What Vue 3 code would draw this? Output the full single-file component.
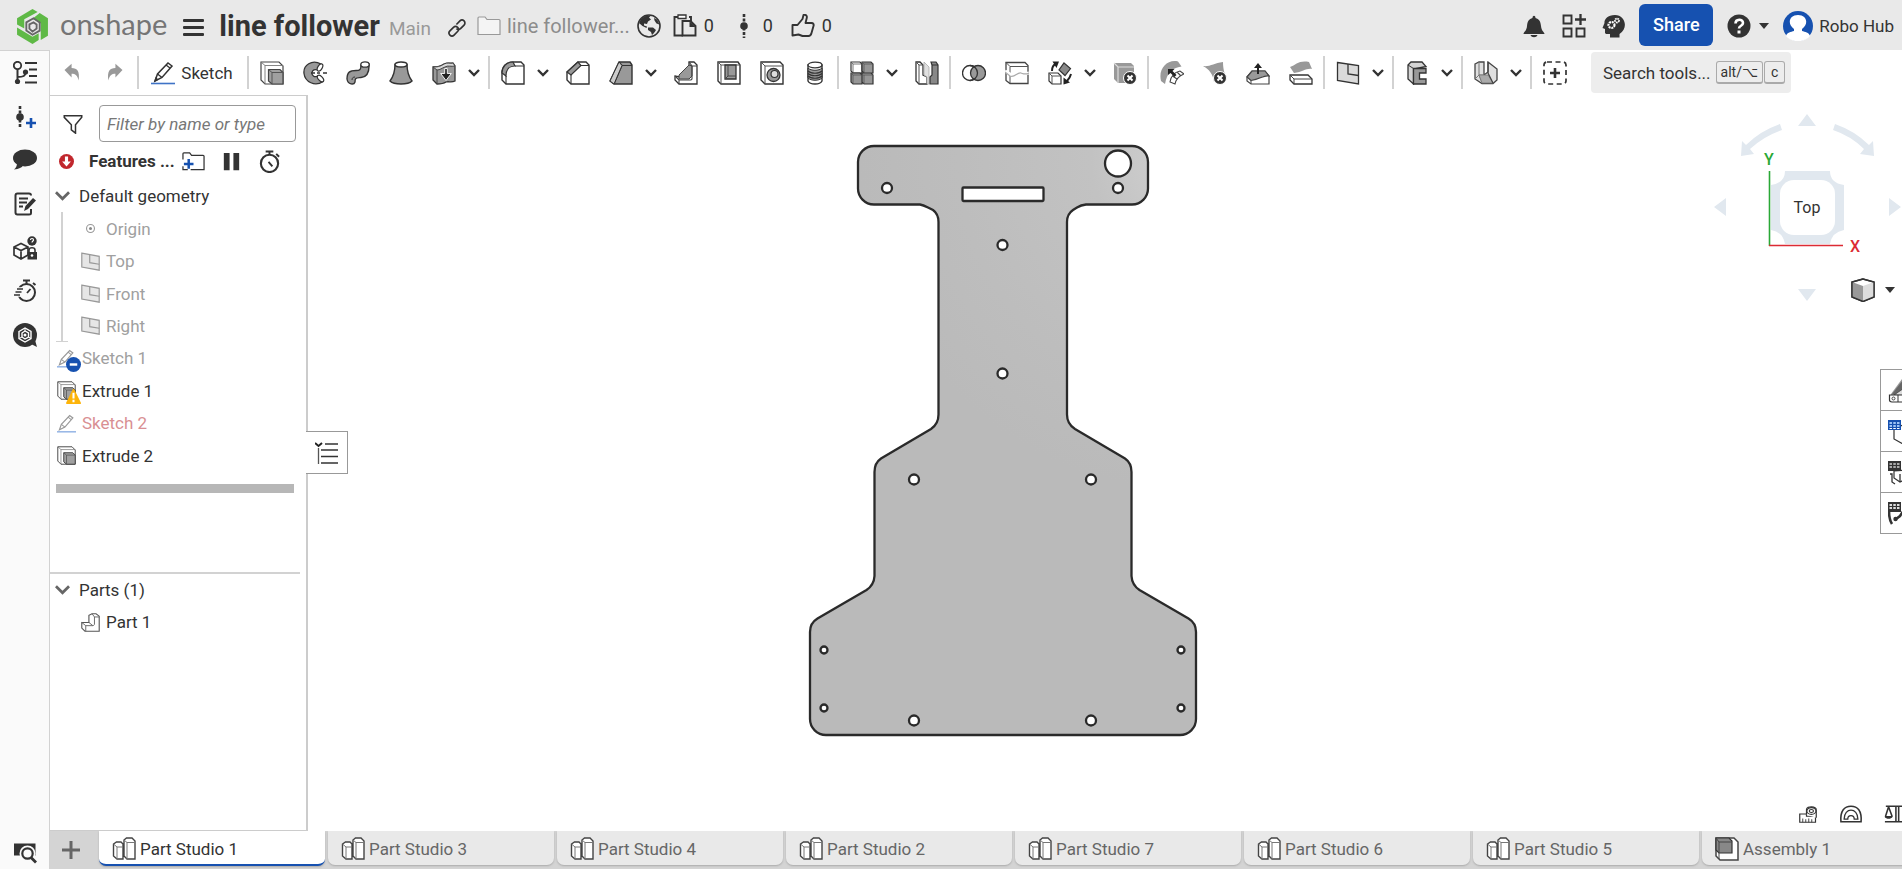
<script setup>
import { ref } from 'vue'

const filter = ref('')

const icons = {
  undo: '<path d="M3 8.500L11.500 1v5c7 0 10 4 8.500 15-1.500-6-4-8-8.500-8v4.500z" fill="#999"/>',
  redo: '<path d="M21 8.500L12.500 1v5c-7 0-10 4-8.500 15 1.500-6 4-8 8.500-8v4.500z" fill="#999"/>',
  sketch: '<path d="M4 20L6.500 13 17 2l4 3L11 16.500z" fill="#fff" stroke="#333" stroke-width="1.500"/><path d="M6.500 13l4.500 3.500M15 4l4 3M4 20l1-3 1.500 1.500z" fill="none" stroke="#333" stroke-width="1.300"/><path d="M0 22.500h24" stroke="#3f73c6" stroke-width="1.600"/>',
  extrude: '<path d="M1 1h18l4 4v18H5l-4-4z" fill="#fff" stroke="#444" stroke-width="1.200"/><path d="M1 1l4 3.500h18M5 4.500V23" fill="none" stroke="#777" stroke-width=".9"/><path d="M8.500 8.500H20l3 3V23H12l-3.500-3z" fill="#a0a0a0" stroke="#444" stroke-width="1.200"/><path d="M8.500 8.500l3.500 3h11M12 11.500V23" fill="none" stroke="#555" stroke-width="1"/>',
  revolve: '<path d="M18 3C9-2 0 4 1 12.500S12 26 20 20.500L14.500 15c-3 2-6-1-5.500-3.500S12 8 14.500 9z" fill="#999" stroke="#333" stroke-width="1.300"/><ellipse cx="17" cy="6.500" rx="4" ry="2.200" transform="rotate(-60 17 6.500)" fill="#fff" stroke="#333" stroke-width="1.200"/><ellipse cx="17.500" cy="17.500" rx="4" ry="2.200" transform="rotate(48 17.500 17.500)" fill="#fff" stroke="#333" stroke-width="1.200"/><path d="M8 12h4m2 0h3m3 0h4" stroke="#333" stroke-width="1.300"/>',
  sweep: '<path d="M1 18c0-7 3-8.500 9-8.500 4 0 5-1 5-5.500l8-1c.500 9-2 13-8 13.500-5 .500-6 0-6 4.500-1 3-7 3-8-3z" fill="#999" stroke="#333" stroke-width="1.400"/><ellipse cx="19" cy="3.500" rx="4.200" ry="2.700" fill="#fff" stroke="#333" stroke-width="1.300"/><path d="M9 16c-2 0-3 1-3 3" fill="none" stroke="#333"/>',
  loft: '<path d="M6 3.500C6 10 4 16 1 20c4 4 18 4 22 0-3-4-5-10-5-16.500z" fill="#999" stroke="#333" stroke-width="1.400"/><ellipse cx="12" cy="3.500" rx="6" ry="2.500" fill="#fff" stroke="#333" stroke-width="1.400"/>',
  thicken: '<path d="M1 6c6 0 8-1 11-3 4-2 6 0 9-1l2 3v15c-4 2-6 0-9 1-3 2-6 2-9 2l-4-4z" fill="#999" stroke="#333" stroke-width="1.300"/><path d="M1 6c6 0 8-1 11-3 4-2 6 0 9-1l2 3c-4 1-7-1-10 1-3 1-5 3-8 3z" fill="#d8d8d8" stroke="#444"/><path d="M5 9v14" stroke="#444"/><path d="M12.700 7.500h2.600v5h4L14 19.500 8.700 12.500h4z" fill="#222" stroke="#fff" stroke-width=".9"/>',
  fillet: '<path d="M12 1h8l3 3v19H5l-4-4v-7C1 6 5 1 12 1z" fill="#fff" stroke="#333" stroke-width="1.400"/><path d="M12 1C5 1 1 6 1 12l4 3c0-6 3-10 9-10z" fill="#999" stroke="#333" stroke-width="1.200"/><path d="M5 15v8M14 5h9" fill="none" stroke="#333" stroke-width="1.100"/>',
  chamfer: '<path d="M12 1h8l3 3v19H5l-4-4v-8z" fill="#fff" stroke="#333" stroke-width="1.400"/><path d="M12 1L1 11l4 3L15 4.500z" fill="#999" stroke="#333" stroke-width="1.200"/><path d="M5 14v9M15 4.500h8" fill="none" stroke="#333" stroke-width="1.100"/>',
  draft: '<path d="M10 1h11l2 3v19H5l-4-3z" fill="#999" stroke="#333" stroke-width="1.400"/><path d="M10 1l3 3.500h10M13 4.500L5 23" fill="none" stroke="#333" stroke-width="1.200"/><path d="M10 1l3 3.500L5 23l-4-3z" fill="#ccc" stroke="#333"/>',
  rib: '<path d="M15 1h5l3 3v19H5l-4-4v-4l5 1 9-9z" fill="#fff" stroke="#333" stroke-width="1.300"/><path d="M15 4L5 14l0 4h10l3-3V5z" fill="#999" stroke="#444"/><path d="M1 15l4 4h12l1-1V5l-3-4M18 5h5M5 19v4" fill="none" stroke="#444" stroke-width="1.100"/>',
  shell: '<path d="M1 1h20l2 3v19H4l-3-3z" fill="#fff" stroke="#333" stroke-width="1.400"/><path d="M1 1l3 3h19M4 4v19" fill="none" stroke="#555"/><path d="M8 4h11v14H8z" fill="#999" stroke="#333" stroke-width="1.300"/><path d="M8 18l3-3h8M11 4v11" fill="none" stroke="#444"/>',
  hole: '<path d="M1 1h19l3 3v19H5l-4-4z" fill="#fff" stroke="#333" stroke-width="1.400"/><path d="M1 1l4 4h18M5 5v18" fill="none" stroke="#555"/><circle cx="13.500" cy="14" r="6.500" fill="#999" stroke="#333" stroke-width="1.300"/><circle cx="14.500" cy="13" r="3.500" fill="#ddd" stroke="#333" stroke-width="1.200"/>',
  thread: '<path d="M5 4v16c2 4 12 4 14 0V4z" fill="#fff" stroke="#333" stroke-width="1.400"/><ellipse cx="12" cy="4" rx="7" ry="2.800" fill="#fff" stroke="#333" stroke-width="1.300"/><path d="M5 7c3 3 11 3 14 0v10c-3 3-11 3-14 0z" fill="#999" stroke="#333"/><path d="M5 10c3 3 11 3 14 0M5 12.500c3 3 11 3 14 0M5 15c3 3 11 3 14 0" fill="none" stroke="#333" stroke-width="1.200"/>',
  pattern: '<g stroke="#333" stroke-width="1.200"><path d="M1 1h9l2 2v9H3l-2-2z" fill="#fff"/><path d="M12 1h9l2 2v9h-9l-2-2zM1 12h9l2 2v9H3l-2-2zM12 12h9l2 2v9h-9l-2-2z" fill="#969696"/></g><path d="M1 1l2 2h9M3 3v9M12 1l2 2h9M14 3v9M1 12l2 2h20M3 14v9M14 14v9" fill="none" stroke="#555" stroke-width=".8"/>',
  mirror: '<path d="M1 1h4l3 3v10l4 2v7H4l-3-3z" fill="#fff" stroke="#333" stroke-width="1.300"/><path d="M1 1l3 3h4M4 4v19" fill="none" stroke="#555"/><path d="M9 1l5 5v17l-2 0V16l-3-2z" fill="#e0e0e0" stroke="#aaa" stroke-width=".8"/><path d="M16 1h5l2 3v19h-8v-7l2-2V4z" fill="#888" stroke="#333" stroke-width="1.200"/><path d="M17 4h6" fill="none" stroke="#333"/>',
  boolean: '<circle cx="8" cy="12" r="7.500" fill="#fff" stroke="#333" stroke-width="1.300"/><circle cx="16" cy="12" r="7.500" fill="#999" stroke="#333" stroke-width="1.300"/><path d="M8 4.500a7.500 7.500 0 0 1 0 15" fill="none" stroke="#333" stroke-width="1.300"/>',
  split: '<path d="M1 1.500h19l3 3v18H5l-4-3z" fill="#fff" stroke="#444" stroke-width="1.300"/><path d="M1 1.500l4 4h18M5 5.500V22" fill="none" stroke="#555"/><path d="M0 10l5 3c5 4 7-3 11-2 3 1 4 2 8 1" fill="none" stroke="#fff" stroke-width="3"/><path d="M0 11l5 4c5 2 7-4 11-3 3 1 4 2 8 0" fill="none" stroke="#aaa" stroke-width="1.200"/>',
  transform: '<path d="M1 12h9l3 3v8H4l-3-3z" fill="#fff" stroke="#333" stroke-width="1.200"/><path d="M1 12l3 3h9M4 15v8" fill="none" stroke="#555"/><path d="M16 2l6.500 5.500-5.500 7-6-5.500z" fill="#888" stroke="#333" stroke-width="1.200"/><path d="M4 10c0-4 1-6 4-7" fill="none" stroke="#222" stroke-width="2"/><path d="M4.500.5H11L8.500 7zM15.500 16.500v7l6.500-2z" fill="#222"/><path d="M23 13c-1 4-2 5-4 7" fill="none" stroke="#222" stroke-width="2"/>',
  remove: '<path d="M1 2h17l3 3v17H5l-4-4z" fill="#999"/><path d="M1 2l4 4h16M5 6v16" fill="none" stroke="#ddd" stroke-width="1.200"/><circle cx="17" cy="17" r="6.500" fill="#333" stroke="#fff" stroke-width="1"/><path d="M14.500 14.500l5 5m0-5l-5 5" stroke="#fff" stroke-width="2"/>',
  modfillet: '<path d="M1 20C-2 8 7-2 18 .5l3.500 5C12 7 7 12 5 23z" fill="#999"/><path d="M10 22c1-6 5-10 10-12l4 3c-5 2-8 5-9 11z" fill="#fff" stroke="#fff" stroke-width="3"/><path d="M10 21c1-6 5-10 10-11l4 3c-5 2-8 5-9 10zM12.500 15l4.500 3M17 11l3.500 3.500" fill="#fff" stroke="#444" stroke-width="1.100"/><path d="M8 8h6.500l-2 2 4 4-2 2-4-4L8 14z" fill="#222"/>',
  delface: '<path d="M0 5c7 1 11-3 20-4 0 8 2 12 3 16L11 21C10 13 6 8 0 5z" fill="#999"/><circle cx="17" cy="17" r="6.500" fill="#333" stroke="#fff" stroke-width="1"/><path d="M14.500 14.500l5 5m0-5l-5 5" stroke="#fff" stroke-width="2"/>',
  moveface: '<path d="M1 16l5-6h13l4 5v8H5l-4-3z" fill="#fff" stroke="#444" stroke-width="1.200"/><path d="M1 16l5-6h13l4 5c-6-1-8 3-18 4.500z" fill="#999" stroke="#444" stroke-width="1.200"/><path d="M5 20v3" stroke="#444"/><path d="M12 2l4 5h-3v6h-2V7H8z" fill="#222"/>',
  replace: '<path d="M1 6C7 4 10-1 20 1l3 7c-6-1-9 3-18 4z" fill="#999"/><path d="M1 14h18l4 4v5H5l-4-4z" fill="#fff" stroke="#333" stroke-width="1.300"/><path d="M1 14l4 4h18M5 18v5" fill="none" stroke="#444"/>',
  plane: '<path d="M1.500 1.500l21 3V23l-21-3.500z" fill="#dadada" stroke="#333" stroke-width="1.300"/><path d="M12 3v10l10.500 1.500" fill="none" stroke="#333" stroke-width="1.300"/>',
  frame: '<path d="M3 4l3-3h11l4 4.500L8.500 8v15L3 18z" fill="#d4d4d4" stroke="#333" stroke-width="1.300"/><path d="M8.500 7.500H21V12h-6.500v6H21v5H8.500z" fill="#999" stroke="#333" stroke-width="1.300"/><path d="M3 4l5.500 3.500" stroke="#333"/>',
  sheet: '<path d="M1 3l4-2h5v13l4-3V1l9 7v11l-4 3.500H8L1 18z" fill="#e0e0e0" stroke="#444" stroke-width="1.300"/><path d="M5 1v13l-4 4M10 14H5l3 8" fill="none" stroke="#777"/><path d="M5 14h9l5 8H8z" fill="#aaa" stroke="#777" stroke-width=".8"/><path d="M14 1v11l5 10" fill="none" stroke="#444" stroke-width="1.200"/>',
  custom: '<rect x="1" y="1" width="22" height="22" rx="3" fill="none" stroke="#333" stroke-width="1.700" stroke-dasharray="5 3.500"/><path d="M12 7v10M7 12h10" stroke="#333" stroke-width="2.600"/>',
  tree: '<circle cx="4.500" cy="4.500" r="3.700" fill="none" stroke="#333" stroke-width="1.800"/><path d="M4.500 8v12M4.500 16c6 0 8-1 8-5" fill="none" stroke="#333" stroke-width="2"/><circle cx="4.500" cy="20.500" r="2.600" fill="#333"/><circle cx="12.500" cy="11" r="2.600" fill="#333"/><path d="M12 2h12M16 8.500h8M16 15h8M12 21.500h12" stroke="#333" stroke-width="2.200"/>',
  addversion: '<path d="M7 1v22" stroke="#333" stroke-width="2.600" stroke-dasharray="3 1.500"/><circle cx="7" cy="12" r="3.800" fill="#333"/><path d="M18 13v10M13 18h10" stroke="#1651b0" stroke-width="2.600"/>',
  comment: '<ellipse cx="12" cy="10" rx="12" ry="8.500" fill="#333"/><path d="M4 15c0 3-1 5-3 6.500 5-.500 8-2 9-4z" fill="#333"/>',
  note: '<path d="M18 17v4c0 1-1 1.500-2 1.500H4.500c-1.500 0-2-.500-2-2V3.500c0-1.500.500-2 2-2H16c1.500 0 2 .500 2 2" fill="none" stroke="#333" stroke-width="2"/><path d="M6 6.500h9M6 10.500h8M6 14.500h4" stroke="#333" stroke-width="1.800"/><path d="M11 19l1.500-5L20 6l3 2.500-8 8.500z" fill="#333"/>',
  cubelock: '<path d="M1 11l7-3.500 7 3.500v8l-7 4-7-4zM1 11l7 3.500L15 11M8 14.500V23" fill="none" stroke="#333" stroke-width="1.700"/><circle cx="19" cy="5" r="4.700" fill="#333"/><path d="M17.500 4c0-2 3-2 3 0 0 1-1.500 1-1.500 2.500" stroke="#fff" stroke-width="1.200" fill="none"/><path d="M16 17v-3c0-3 6-3 6 0v3" fill="none" stroke="#333" stroke-width="1.600"/><path d="M14.500 16H24v7.500h-9.500z" fill="#333"/><circle cx="19" cy="19.500" r="1.300" fill="#fff"/>',
  speed: '<circle cx="13.500" cy="13.500" r="8.500" fill="none" stroke="#333" stroke-width="2"/><path d="M10 1.500h7M13.500 1.500V5M20 4l2.500 2" stroke="#333" stroke-width="2"/><path d="M14 14l3.500-4" stroke="#333" stroke-width="1.800"/><path d="M4 10h7M2 13h8M1 16h7" stroke="#fafafa" stroke-width="3.500"/><path d="M4 10h6M2.500 13h6M1 16h6" stroke="#333" stroke-width="1.500"/>',
  assist: '<circle cx="12" cy="12" r="12" fill="#333"/><path d="M16 20l8 4-2-7z" fill="#333"/><path d="M6 8.500L12 5l6 3.500v7L12 19l-6-3.500z" fill="none" stroke="#fff" stroke-width="1.400"/><path d="M9 10l3-2 3.500 2v4L12 16l-3-2z" fill="none" stroke="#fff" stroke-width="1.400"/><circle cx="12" cy="12" r="1.500" fill="#fff"/><path d="M12 5v3M18 15.500L15.500 14M6 15.500L9 14" stroke="#fff"/>',
  finder: '<path d="M1 3.500h21.500v12H1z" fill="#333"/><circle cx="14.500" cy="13.500" r="6.500" fill="#fafafa" stroke="#fafafa" stroke-width="3"/><circle cx="14.500" cy="13.500" r="5.200" fill="#fafafa" stroke="#333" stroke-width="2.200"/><path d="M18 17.500l5 5" stroke="#333" stroke-width="2.800"/>',
  studio: '<path d="M1.500 7l3-2H9l2 2v15H5l-3.500-3zM12 3l2.500-2H20l3 3v18h-8l-3-3z" fill="#fff" stroke="#444" stroke-width="1.400"/><path d="M1.500 7L5 10h6M5 10v12M12 3l3 2.500h8M15 5.500V22" fill="none" stroke="#777" stroke-width="1"/>',
  assembly: '<path d="M1 1h18l4 4v18H5l-4-4z" fill="#fff" stroke="#444" stroke-width="1.500"/><path d="M1 1h13l3 3v12H4l-3-3z" fill="#888" stroke="#333" stroke-width="1.200"/><path d="M1 1l3 4h13M4 5v17" fill="none" stroke="#444"/>',
  origin: '<circle cx="12" cy="12" r="5" fill="#fff" stroke="#999" stroke-width="1.400"/><circle cx="12" cy="12" r="1.900" fill="#888"/>',
  planelight: '<path d="M1 1.500l22 4V23L1 19z" fill="#e6e6e6" stroke="#999" stroke-width="1.500"/><path d="M11 3.500v10l12 2" fill="none" stroke="#999" stroke-width="1.500"/>',
  sketchlight: '<path d="M3 20l2.500-7L16 2l4 3L10 16.500z" fill="#fff" stroke="#999" stroke-width="1.500"/><path d="M5.500 13l4.500 3.500M14 4l4 3" fill="none" stroke="#999" stroke-width="1.300"/><path d="M0 22.500h24" stroke="#8fb0e4" stroke-width="1.800"/>',
  part: '<path d="M1 12h9V3l4-2h5l4 3v19H5l-4-4z" fill="#fff" stroke="#555" stroke-width="1.400"/><path d="M1 12l5 4h9c1 0 2-1 2-2V5l-3-4M17 5h6M6 16v7M10 12l5 4" fill="none" stroke="#666" stroke-width="1.200"/>',
  link: '<g transform="rotate(-45 12 12)" fill="none" stroke="#333" stroke-width="2"><rect x="0" y="8.500" width="13" height="7" rx="3.500"/><path d="M14.500 8.500h6a3.500 3.500 0 0 1 0 7h-6a3.500 3.500 0 0 1-3.500-3.500"/></g>',
  folder: '<path d="M1 20.500V4c0-.500.500-1 1-1h6l2 2.500h12c.500 0 1 .500 1 1v14z" fill="#f4f4f4" stroke="#999" stroke-width="1.200"/>',
  globe: '<circle cx="12" cy="12" r="11" fill="none" stroke="#333" stroke-width="1.600"/><path d="M4 5c3-3 6-4 10-3.500l-2 2 2 2-3 2-1 2.500-3-.5 0 2 3 1-.5 1.500-4-2L2 9zM11 13.500l5 0 3 2.500c-1 2-2 3-4 5l-1-3-3-2zM17 4l3 1.500 2.500 5-3-1-2-3z" fill="#333"/>',
  copy: '<path d="M10 21.500H1.500V3H5M16 3h2v4" fill="none" stroke="#333" stroke-width="1.900"/><path d="M5 1h8v3.500H5z" fill="#fff" stroke="#333" stroke-width="1.300"/><path d="M9.500 7h8l5 5v9.500h-13z" fill="#e9e9e9" stroke="#333" stroke-width="1.900"/><path d="M16.500 7v6h6z" fill="#333"/>',
  version: '<path d="M12 0v24" stroke="#333" stroke-width="2.600" stroke-dasharray="3 1.500"/><circle cx="12" cy="12" r="3.800" fill="#333"/>',
  thumb: '<path d="M1.500 11h5l5-6 1-4c3-.500 4 1 3 4l-1 4h6c2 0 2.500 1.500 2 3l-2 7c-.500 2-1 3-3 3h-6l-4-1.500-6 1z" fill="none" stroke="#333" stroke-width="1.900" stroke-linejoin="round"/>',
  bell: '<path d="M1.500 20c0-2 3-2.500 3.500-8 .500-5 2-7 5.500-8 0-3 3-3 3 0 3.500 1 5 3 5.500 8 .500 5.500 3.500 6 3.500 8z" fill="#333"/><path d="M8.500 21h7c-1 3-6 3-7 0z" fill="#333"/>',
  apps: '<path d="M1.500 1.500h8v8h-8zM1.500 14.500h8v8h-8zM14.500 14.500h8v8h-8z" fill="none" stroke="#333" stroke-width="1.900"/><path d="M18.500 0v11M13 5.500h11" stroke="#333" stroke-width="2.300"/>',
  head: '<path d="M13 1C5 1 2 6 2.500 9L0.500 14l2.500 1v4c1 1.500 3 1 5 1v3.500h9.500V20C27 14 23 1 13 1z" fill="#333"/><circle cx="9.500" cy="11" r="3" fill="none" stroke="#fff" stroke-width="2.200" stroke-dasharray="2 .8"/><circle cx="15" cy="6.500" r="2" fill="none" stroke="#fff" stroke-width="1.800" stroke-dasharray="1.600 .6"/>',
  help: '<circle cx="12" cy="12" r="11.500" fill="#333"/><path d="M8.500 9.500c0-5 7.500-5 7.500-.500 0 3-4 2.500-4 5.500" fill="none" stroke="#fff" stroke-width="2.600"/><path d="M10.500 16.500h3v3h-3z" fill="#fff"/>',
  filter: '<path d="M1.500 2h21v2L15 13v10l-5-4v-6L1.500 4z" fill="#fff" stroke="#333" stroke-width="1.800"/>',
  newfolder: '<path d="M1 8V4c0-.500.500-1 1-1h6l2 2.500h12c.500 0 1 .500 1 1v14H9M1 8v2m0 7v3.500h5" fill="none" stroke="#333" stroke-width="1.300"/><path d="M7 9.500v10M2 14.500h10" stroke="#1651b0" stroke-width="2.600"/>',
  pause: '<path d="M4 3h6v18H4zM14 3h6v18h-6z" fill="#333"/>',
  timer: '<circle cx="12" cy="14" r="9" fill="none" stroke="#333" stroke-width="2.200"/><path d="M8 1.500h8M12 1.500V5M19 4l3 3M11 12.500l4 4.500" stroke="#333" stroke-width="2"/>',
  error: '<circle cx="12" cy="12" r="12" fill="#c1272d"/><path d="M9.500 4h5v8H19l-7 8-7-8h4.500z" fill="#fff"/>',
  tape: '<path d="M1 12h9v3h12v8H1z" fill="#fff" stroke="#333" stroke-width="1.600"/><path d="M10 13V6c0-5 14-5 13 1v10" fill="#fff" stroke="#333" stroke-width="1.600"/><ellipse cx="16.500" cy="8" rx="6" ry="4.500" fill="#fff" stroke="#333" stroke-width="1.500"/><ellipse cx="16.500" cy="8" rx="2.800" ry="2" fill="none" stroke="#333" stroke-width="1.500"/><path d="M5 23v-5m4 5v-4m4 4v-5m4 5v-4" stroke="#333" stroke-width="1.200"/>',
  protractor: '<path d="M1 20.500C0 8 5 3.500 12 3.500S24 8 23 20.500z" fill="#fff" stroke="#333" stroke-width="1.700"/><path d="M4.500 17.500c0-13 15-13 15 0h-4c0-5-7-5-7 0z" fill="#fff" stroke="#333" stroke-width="1.400"/>',
  balance: '<path d="M2 3.500h22M5 4L1.500 15M5 4l4 11M1 15h8M13 3v17M16 3v17M1 20.500h23" fill="none" stroke="#333" stroke-width="1.700"/><path d="M1 15h8c-1 3-7 3-8 0z" fill="#333"/>',
  appearance: '<path d="M3 15L14 0h10v22H3z" fill="#999"/><path d="M4 15L15 1l9 4v12z" fill="#666"/><path d="M6 16l16-11 2 0v12z" fill="#ddd" stroke="#444" stroke-width=".8"/><path d="M1.500 16H24v7H4c-2 0-2.500-1-2.500-2z" fill="#fff" stroke="#333" stroke-width="1.200"/><path d="M10 16v7" stroke="#333"/><circle cx="5.500" cy="19.500" r="1.500" fill="none" stroke="#444"/>',
  config: '<path d="M6 9v10l9 5 9-4V6l-9-1z" fill="#fff" stroke="#333" stroke-width="1.200"/><path d="M0 0h13v10H0z" fill="#1651b0"/><path d="M1.500 2h2.500v2H1.500zM5.300 2h2.500v2H5.300zM9 2h2.500v2H9zM1.500 5h2.500v2H1.500zM5.300 5h2.500v2H5.300zM9 5h2.500v2H9z" fill="#9cc3f5"/><path d="M1.500 8h2.500v1H1.500zM5.300 8h2.500v1H5.300zM9 8h2.500v1H9z" fill="#fff"/>',
  bom: '<path d="M6 10v7l6 4 8-4V9z" fill="#fff" stroke="#333" stroke-width="1.200"/><path d="M12 13v8M2 13h2v8l3 2" fill="none" stroke="#333" stroke-width="1.300"/><path d="M0 0h13v10H0z" fill="#333"/><path d="M1.500 2h2.500v2H1.500zM5.300 2h2.500v2H5.300zM9 2h2.500v2H9zM1.500 5h2.500v2H1.500zM5.300 5h2.500v2H5.300zM9 5h2.500v2H9z" fill="#aaa"/>',
  variables: '<path d="M1 9c0 7 1 10 3 13M8 17l4-3 4-6" fill="none" stroke="#333" stroke-width="2.600"/><circle cx="7.500" cy="17" r="2.200" fill="#333"/><path d="M0 0h13v10H0z" fill="#333"/><path d="M1.500 2h2.500v2H1.500zM5.300 2h2.500v2H5.300zM9 2h2.500v2H9zM1.500 5h2.500v2H1.500zM5.300 5h2.500v2H5.300zM9 5h2.500v2H9z" fill="#ddd"/>',
  list: '<path d="M0 2l3.500 3L7 2" fill="none" stroke="#222" stroke-width="2"/><path d="M3.500 7v16" stroke="#555" stroke-width="1.300"/><path d="M10 3h13M6 9h17M6 15.500h17M6 22h17" stroke="#333" stroke-width="1.500"/>',
  shaded: '<path d="M12 1L1 4v15l11 4.500L23 19V4z" fill="#fff" stroke="#333" stroke-width="1.400"/><path d="M1 4l11 4v15L1 19z" fill="#999"/><path d="M23 4L12 8v15l11-4z" fill="#ddd"/><path d="M12 1L1 4v15l11 4.500L23 19V4z" fill="none" stroke="#333" stroke-width="1.400"/>'
}

// A "|" is a separator and a "v" opens the menu of the tool before it.
const tools = ['|', 'extrude', 'revolve', 'sweep', 'loft', 'thicken', 'v', '|', 'fillet', 'v', 'chamfer', 'draft', 'v', 'rib', 'shell', 'hole', 'thread', '|', 'pattern', 'v', 'mirror', '|', 'boolean', 'split', 'transform', 'v', 'remove', '|', 'modfillet', 'delface', 'moveface', 'replace', '|', 'plane', 'v', '|', 'frame', 'v', '|', 'sheet', 'v', '|', 'custom']
const rail = ['tree', 'addversion', 'comment', 'note', 'cubelock', 'speed', 'assist']
const sidePanels = ['appearance', 'config', 'bom', 'variables']

const features = [
  { name: 'Origin', icon: 'origin', kind: 'child' },
  { name: 'Top', icon: 'planelight', kind: 'child' },
  { name: 'Front', icon: 'planelight', kind: 'child' },
  { name: 'Right', icon: 'planelight', kind: 'child' },
  { name: 'Sketch 1', icon: 'sketchlight', kind: 'muted', badge: 'minus' },
  { name: 'Extrude 1', icon: 'extrude', kind: 'normal', badge: 'warn' },
  { name: 'Sketch 2', icon: 'sketchlight', kind: 'failed' },
  { name: 'Extrude 2', icon: 'extrude', kind: 'normal' }
]

const tabs = ['Part Studio 1', 'Part Studio 3', 'Part Studio 4', 'Part Studio 2', 'Part Studio 7', 'Part Studio 6', 'Part Studio 5', 'Assembly 1']

const holes = [
  [318, 23.5, 13], [87, 48, 5], [318, 48, 5], [202.5, 105, 5], [202.5, 233.5, 5],
  [114, 339.5, 5], [291, 339.5, 5], [24, 510, 3.5], [381, 510, 3.5],
  [24, 568, 3.5], [381, 568, 3.5], [114, 580.5, 5], [291, 580.5, 5]
]
</script>

<template>
  <div class="app">
    <header class="header">
      <a class="brand" href="#">
        <svg class="logo" viewBox="0 0 30 34" aria-hidden="true">
          <path d="M15 0l5 3L7 10v9l-7-4V9z" fill="#5fb946" />
          <path d="M22 4l8 5v17l-7 4V14l-8-4.500z" fill="#5fb946" />
          <path d="M0 18l15 9 6-3.500V30l-6 4L0 25z" fill="#5fb946" />
          <path d="M9 13l7-4 6 4v8l-7 4-6-4z" fill="none" stroke="#666" stroke-width="1.8" />
          <path d="M12 15l4-2 3 2v4l-4 3-3-3z" fill="none" stroke="#666" stroke-width="1.8" />
        </svg>
        <span>onshape</span>
      </a>
      <button class="burger" aria-label="Menu"><i></i><i></i><i></i></button>
      <h1>line follower</h1>
      <span class="branch">Main</span>
      <button class="link" aria-label="Copy link"><svg viewBox="0 0 24 24" v-html="icons.link" /></button>
      <a class="location" href="#"><svg class="ic" viewBox="0 0 24 24" v-html="icons.folder" />line follower...</a>
      <svg class="ic globe" viewBox="0 0 24 24" v-html="icons.globe" />
      <button class="count"><svg class="ic" viewBox="0 0 24 24" v-html="icons.copy" />0</button>
      <button class="count"><svg class="ic" viewBox="0 0 24 24" v-html="icons.version" />0</button>
      <button class="count"><svg class="ic" viewBox="0 0 24 24" v-html="icons.thumb" />0</button>
      <div class="account">
        <button class="bar-icon" aria-label="Notifications"><svg class="ic" viewBox="0 0 24 24" v-html="icons.bell" /></button>
        <button class="bar-icon" aria-label="Apps"><svg class="ic" viewBox="0 0 24 24" v-html="icons.apps" /></button>
        <button class="bar-icon" aria-label="Learning"><svg class="ic" viewBox="0 0 24 24" v-html="icons.head" /></button>
        <button class="share">Share</button>
        <button class="help" aria-label="Help"><svg class="ic" viewBox="0 0 24 24" v-html="icons.help" /><i class="caret"></i></button>
        <button class="user">
          <svg class="avatar" viewBox="0 0 30 30" aria-hidden="true">
            <circle cx="15" cy="15" r="15" fill="#1651b0" />
            <path d="M3 25c1-4 5-4 8-5v-2c-7-5-5-14 4-14s11 9 4 14v2c3 1 7 1 8 5-5 7-19 7-24 0z" fill="#fff" />
          </svg>Robo Hub
        </button>
      </div>
    </header>

    <nav class="rail">
      <div class="rail-top">
        <button v-for="r in rail" :key="r" :aria-label="r"><svg class="ic" viewBox="0 0 24 24" v-html="icons[r]" /></button>
      </div>
      <button class="rail-end" aria-label="finder"><svg class="ic" viewBox="0 0 24 24" v-html="icons.finder" /></button>
    </nav>

    <div class="toolbar">
      <button class="tool" aria-label="Undo"><svg class="small" viewBox="0 0 24 24" v-html="icons.undo" /></button>
      <button class="tool" aria-label="Redo"><svg class="small" viewBox="0 0 24 24" v-html="icons.redo" /></button>
      <i class="sep"></i>
      <button class="sketch"><svg class="ic" viewBox="0 0 24 24" v-html="icons.sketch" />Sketch</button>
      <template v-for="(t, n) in tools" :key="n">
        <i v-if="t === '|'" class="sep"></i>
        <button v-else-if="t === 'v'" class="drop" aria-label="More">
          <svg viewBox="0 0 12 8"><path d="M1 1l5 5 5-5" fill="none" stroke="#333" stroke-width="2.4" /></svg>
        </button>
        <button v-else class="tool" :aria-label="t"><svg class="ic" viewBox="0 0 24 24" v-html="icons[t]" /></button>
      </template>
      <button class="search">Search tools... <kbd>alt/⌥</kbd><kbd>c</kbd></button>
    </div>

    <main class="workspace">
      <aside class="panel">
        <div class="filter">
          <svg class="small" viewBox="0 0 24 24" v-html="icons.filter" />
          <input v-model="filter" type="text" placeholder="Filter by name or type" aria-label="Filter by name or type">
        </div>
        <div class="heading">
          <svg class="error" viewBox="0 0 24 24" v-html="icons.error" />
          <h2>Features ...</h2>
          <button aria-label="New folder"><svg class="ic" viewBox="0 0 24 24" v-html="icons.newfolder" /></button>
          <button aria-label="Pause"><svg class="ic" viewBox="0 0 24 24" v-html="icons.pause" /></button>
          <button aria-label="Timing"><svg class="ic" viewBox="0 0 24 24" v-html="icons.timer" /></button>
        </div>
        <ul class="features">
          <li class="group">
            <svg class="fold" viewBox="0 0 16 10"><path d="M1 1l7 7 7-7" fill="none" stroke="#666" stroke-width="3" /></svg>Default geometry
          </li>
          <li v-for="f in features" :key="f.name" :class="f.kind">
            <span class="glyph">
              <svg viewBox="0 0 24 24" v-html="icons[f.icon]" />
              <svg v-if="f.badge === 'minus'" class="badge" viewBox="0 0 16 16"><circle cx="8" cy="8" r="8" fill="#1651b0" /><path d="M4 8h8" stroke="#fff" stroke-width="2.6" /></svg>
              <svg v-if="f.badge === 'warn'" class="badge" viewBox="0 0 16 16"><path d="M8 1l7 14H1z" fill="#fdb40a" stroke="#fdb40a" stroke-width="2" stroke-linejoin="round" /><path d="M8 4v6M8 11.500v2.500" stroke="#fff" stroke-width="2.2" /></svg>
            </span>{{ f.name }}
          </li>
        </ul>
        <div class="rollback"></div>
        <ul class="parts">
          <li class="group">
            <svg class="fold" viewBox="0 0 16 10"><path d="M1 1l7 7 7-7" fill="none" stroke="#666" stroke-width="3" /></svg>Parts (1)
          </li>
          <li class="part"><span class="glyph"><svg viewBox="0 0 24 24" v-html="icons.part" /></span>Part 1</li>
        </ul>
      </aside>
      <button class="flyout" aria-label="Feature list"><svg class="ic" viewBox="0 0 24 24" v-html="icons.list" /></button>

      <section class="canvas">
        <svg class="model" viewBox="0 0 406 604" role="img" aria-label="Part 1">
          <defs>
            <radialGradient id="shade" gradientUnits="userSpaceOnUse" cx="390" cy="20" r="330">
              <stop offset="0" stop-color="#d2d2d2" />
              <stop offset=".3" stop-color="#c2c2c2" />
              <stop offset=".7" stop-color="#bdbdbd" />
              <stop offset="1" stop-color="#bababa" />
            </radialGradient>
          </defs>
          <path
            d="M74 6H332a16 16 0 0 1 16 16V48a16 16 0 0 1-16 16.500H286Q281 65 277 67.500L273 70Q267 74 267 82V274.500Q267 284 275 289L325 318.500Q331.500 323 331.500 332V436Q332 445 339.500 450L388.500 478.500Q396 483 396 492V579a16 16 0 0 1-16 16H26a16 16 0 0 1-16-16V492Q10 483 17.500 478.500L66.500 450Q74 445 74.500 436V332Q74.500 323 81 318.500L131 289Q138.500 284 138.500 274.500V82Q138.500 74 133 70L128 67.500Q123 65 120 64.500H74A16 16 0 0 1 58 48V22A16 16 0 0 1 74 6z"
            fill="url(#shade)" stroke="#2a2a2a" stroke-width="2.3" />
          <rect x="162.500" y="47.500" width="81" height="13.500" rx="1" fill="#fff" stroke="#2a2a2a" stroke-width="2.3" />
          <circle v-for="(h, n) in holes" :key="n" :cx="h[0]" :cy="h[1]" :r="h[2]" fill="#fff" stroke="#2a2a2a" stroke-width="2.3" />
        </svg>

        <svg class="viewcube" viewBox="0 0 222 210" role="img" aria-label="View cube">
          <g fill="#e1e8ef">
            <path d="M127 14l9 12h-18zM127 201l9-12h-18zM34 107l12-9v18zM221 107l-12-9v18z" />
            <path d="M100 24l2 6Q84 36 70 49l4 5-13 2 1-15 4 4Q80 31 100 24zM155 24l-2 6q18 6 31 19l-4 5 14 2-1-15-4 4Q175 31 155 24z" />
            <path d="M105 71h45q0 12 14 14v45q-12 2-14 14h-45q-2-12-14-14V85q14-2 14-14z" />
          </g>
          <rect x="100" y="80" width="55" height="55" rx="14" fill="#fff" />
          <path d="M89.500 71v75" stroke="#2aa836" stroke-width="1.600" />
          <path d="M89 145.500h74" stroke="#dc2b34" stroke-width="1.600" />
          <text x="127" y="113" class="face">Top</text>
          <text x="89" y="65" class="axis y">Y</text>
          <text x="175" y="152" class="axis x">X</text>
        </svg>
        <button class="shading" aria-label="View options"><svg class="ic" viewBox="0 0 24 24" v-html="icons.shaded" /><i class="caret"></i></button>

        <div class="side">
          <button v-for="s in sidePanels" :key="s" :aria-label="s"><svg class="ic" viewBox="0 0 24 24" v-html="icons[s]" /></button>
        </div>

        <div class="measure">
          <button aria-label="Measure"><svg viewBox="0 0 24 24" v-html="icons.tape" /></button>
          <button aria-label="Angle"><svg viewBox="0 0 24 24" v-html="icons.protractor" /></button>
          <button aria-label="Mass properties"><svg viewBox="0 0 24 24" v-html="icons.balance" /></button>
        </div>
      </section>
    </main>

    <footer class="tabs">
      <button class="add" aria-label="Add tab"><svg viewBox="0 0 20 20"><path d="M10 1v18M1 10h18" stroke="#666" stroke-width="3" /></svg></button>
      <button v-for="(t, n) in tabs" :key="t" class="tab" :class="{ active: n === 0 }">
        <svg class="ic" viewBox="0 0 24 24" v-html="n === 7 ? icons.assembly : icons.studio" />{{ t }}
      </button>
    </footer>
  </div>
</template>

<style>
body { margin: 0; overflow: hidden; }
</style>

<style scoped>
.app {
  display: grid;
  grid-template: 50px 45px 1fr 38px / 50px 1fr;
  height: 100vh;
  overflow: hidden;
  background: #fff;
  color: #333;
  font: 17px/20px Roboto, "Liberation Sans", sans-serif;
}
* { box-sizing: border-box; }
button { padding: 0; border: 0; background: none; color: inherit; font: inherit; display: flex; align-items: center; justify-content: center; flex: none; white-space: nowrap; }
a { color: inherit; text-decoration: none; }
h1, h2, ul { margin: 0; padding: 0; }
li { list-style: none; }
svg { display: block; flex: none; }
.ic { width: 24px; height: 24px; }
.small { width: 20px; height: 20px; }
.caret { border: 5px solid transparent; border-top: 6px solid #333; border-bottom: 0; }

.header { grid-column: 1 / -1; display: flex; align-items: center; background: #e9e9e9; padding: 2px 8px 0 17px; white-space: nowrap; }
.brand { display: flex; align-items: center; gap: 12px; color: #757575; font: 29px/32px Lato, sans-serif; }
.brand span { padding-bottom: 4px; }
.logo { width: 31px; height: 35px; }
.burger { flex-direction: column; gap: 4px; width: 21px; margin: 2px 15px 0 16px; }
.burger i { width: 21px; height: 3px; border-radius: 1px; background: #333; }
h1 { font-size: 29px; line-height: 32px; font-weight: 700; }
.branch { margin: 5px 16px 0 9px; font-size: 19px; color: #999; }
.link svg { width: 20px; height: 20px; }
.link { margin: 4px 10px 0 0; }
.location { display: flex; align-items: center; gap: 6px; margin-right: 7px; font-size: 20px; color: #8c8c8c; }
.globe { margin-right: 12px; }
.count { gap: 7px; width: 59px; font-size: 18px; justify-content: flex-start; }
.account { display: flex; align-items: center; margin-left: auto; gap: 14px; }
.bar-icon { width: 26px; }
.share { width: 74px; height: 42px; margin: 0 0 2px -2px; border-radius: 6px; background: #1651b0; color: #fff; font-size: 18px; font-weight: 500; }
.account .help { gap: 8px; }
.user { gap: 6px; }
.avatar { width: 30px; height: 30px; }

.rail { grid-row: 2 / -1; display: flex; flex-direction: column; justify-content: space-between; align-items: center; background: #fafafa; border: solid #d2d2d2; border-width: 1px 1px 0 0; }
.rail-top { display: flex; flex-direction: column; height: 306px; }
.rail-top button { flex: 1; }
.rail-end { height: 35px; }

.toolbar { display: flex; align-items: center; height: 45px; }
.tool { width: 43px; height: 45px; }
.drop { width: 22px; height: 45px; padding-right: 4px; }
.drop svg { width: 12px; height: 8px; }
.sep { flex: none; width: 2px; height: 33px; margin: 0 1px; background: #d2d2d2; }
.sketch { width: 106px; padding-right: 2px; gap: 6px; height: 45px; font-size: 17px; }
.search { width: 200px; height: 41px; margin-left: auto; margin-right: 111px; padding-left: 12px; justify-content: flex-start; border-radius: 4px; background: #ededed; font-size: 17px; }
kbd { height: 23px; padding: 0 4px; border: 1px solid #aaa; border-bottom-width: 2px; border-radius: 3px; font: 14px/20px Roboto, "DejaVu Sans", sans-serif; }
kbd:first-of-type { margin-left: 5px; }
kbd + kbd { margin-left: 1px; padding: 0 6px; }

.workspace { position: relative; display: flex; min-height: 0; overflow: hidden; }
.panel { width: 258px; flex: none; border: solid #ccc; border-width: 1px 2px 1px 0; }
.filter { display: flex; align-items: center; gap: 16px; padding: 9px 10px 0 13px; }
.filter input { width: 197px; height: 37px; padding: 0 7px; border: 1px solid #999; border-radius: 4px; font: italic 17px/20px Roboto, sans-serif; color: #333; outline: 0; }
.filter input::placeholder { color: #777; opacity: 1; }
.heading { display: flex; align-items: center; height: 38px; padding: 0 0 0 9px; gap: 15px; }
.error { width: 15px; height: 15px; }
h2 { width: 78px; font-size: 17px; line-height: 20px; font-weight: 700; white-space: nowrap; }
.heading .ic { width: 23px; height: 23px; }
.features { position: relative; display: flex; flex-direction: column; height: 292px; }
.features::before { content: ""; position: absolute; left: 11px; top: 32px; width: 2px; height: 129px; background: #d2d2d2; }
.features::after { content: ""; position: absolute; left: 6px; top: 161px; width: 12px; height: 1px; background: #d2d2d2; }
.features li { flex: 1; }
li { display: flex; align-items: center; gap: 6px; padding-left: 7px; }
.group { gap: 9px; padding-left: 5px; }
.fold { width: 15px; height: 10px; }
.glyph { position: relative; width: 19px; }
.glyph svg { width: 19px; height: 19px; }
.glyph .badge { position: absolute; left: 9px; top: 8px; width: 15px; height: 15px; }
.child { padding-left: 31px; color: #a0a0a0; }
.muted { color: #a0a0a0; }
.failed { color: #d98f93; }
.rollback { height: 9px; margin: 12px 12px 79px 6px; background: #b7b7b7; }
.parts { margin-right: 6px; border-top: 2px solid #d2d2d2; }
.parts li { height: 32px; }
.parts .part { padding-left: 31px; }
.flyout { position: absolute; left: 256px; top: 336px; width: 42px; height: 43px; background: #fff; border: 1px solid #999; border-left: 0; }

.canvas { position: relative; flex: 1; min-width: 0; }
.model { position: absolute; left: 492px; top: 45px; width: 406px; height: 604px; }
.viewcube { position: absolute; right: 0; top: 5px; width: 222px; height: 210px; }
.face { font: 16px Roboto, sans-serif; text-anchor: middle; fill: #333; }
.axis { font: 500 16px Roboto, sans-serif; text-anchor: middle; }
.axis.y { fill: #2aa836; }
.axis.x { fill: #dc2b34; }
.shading { position: absolute; right: 7px; top: 183px; gap: 10px; }
.side { position: absolute; left: 100%; top: 274px; margin-left: -22px; border: 1px solid #999; border-bottom: 0; background: #fff; }
.side button { width: 42px; height: 41px; padding: 2px 4px 0 0; border-bottom: 1px solid #999; }
.measure { position: absolute; right: -5px; bottom: 6px; display: flex; align-items: center; gap: 20px; }
.measure svg { width: 24px; height: 22px; }
.measure button:first-child svg { width: 22px; height: 18px; }

.tabs { display: flex; gap: 3px; background: #d4d4d4; overflow: hidden; }
.add { width: 46px; height: 37px; padding-right: 4px; }
.add svg { width: 20px; height: 20px; }
.tab { width: 226px; height: 34px; padding: 2px 0 0 13px; gap: 4px; justify-content: flex-start; border-radius: 0 0 7px 7px; background: #e9e9e9; color: #666; box-shadow: 0 1px 2px #aaa; }
.tab.active { height: 35px; background: #fff; color: #333; border-bottom: 2px solid #1651b0; }
</style>
